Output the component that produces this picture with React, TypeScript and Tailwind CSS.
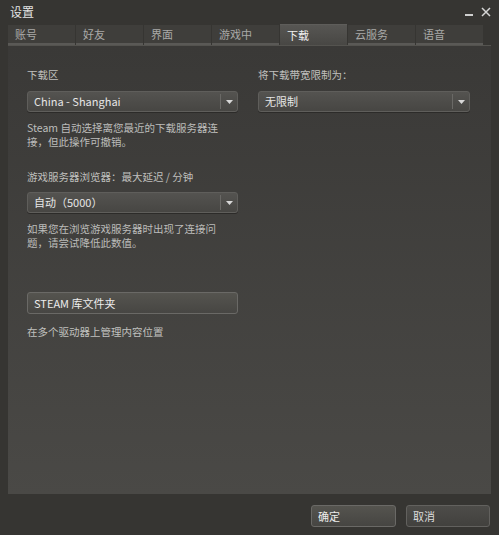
import React from 'react';

const tabs = ['账号', '好友', '界面', '游戏中', '下载', '云服务', '语音'];
const font = { fontFamily: '"Noto Sans CJK SC", "Noto Sans", sans-serif' };

const Dropdown: React.FC<{ value: string }> = ({ value }) => (
  <div className="flex h-[21px] items-center rounded-[3px] border border-[#5f5e5b] bg-gradient-to-b from-[#545350] to-[#474643] text-[11px] text-[#e6e6e6] shadow-[0_1px_0_#2c2b29]">
    <span className="flex-1 truncate pl-[6px]">{value}</span>
    <div className="flex h-[15px] w-[17px] items-center justify-center border-l border-[#6a6966]">
      <svg width="7" height="4" viewBox="0 0 7 4">
        <path d="M0 0h7L3.5 4z" fill="#d8d8d8" />
      </svg>
    </div>
  </div>
);

const App: React.FC = () => {
  return (
    <div className="flex h-[535px] w-[499px] flex-col bg-[#363532] text-[#c0c0be]" style={font}>
      {/* Title bar */}
      <div className="flex h-[24px] items-center justify-between pl-[10px] pr-[8px]">
        <span className="text-[12px] text-[#e4e4e4]">设置</span>
        <div className="flex items-center gap-[8px] text-[#d0d0d0]">
          <span className="mt-[5px] block h-[2px] w-[8px] bg-[#cfcfcf]" />
          <svg width="10" height="10" viewBox="0 0 10 10">
            <path d="M1 1L9 9M9 1L1 9" stroke="#d6d6d6" strokeWidth="1.5" />
          </svg>
        </div>
      </div>

      {/* Tabs */}
      <div className="flex h-[21px] gap-[1px] px-[8px]">
        {tabs.map((t) => {
          const active = t === '下载';
          return (
            <div
              key={t}
              className={
                active
                  ? 'flex h-[21px] w-[67px] items-center border-t border-[#5e5d5a] bg-gradient-to-b from-[#575653] to-[#484744] pl-[7px] text-[11px] text-[#f0f0f0]'
                  : 'mt-[1px] flex h-[20px] w-[67px] items-center border-b-2 border-[#5a5956] bg-[#3f3e3b] pl-[7px] text-[11px] text-[#a9a9a7]'
              }
            >
              {t}
            </div>
          );
        })}
      </div>

      {/* Panel */}
      <div className="mx-[8px] flex-1 border-t border-[#54534f] bg-gradient-to-b from-[#3a3937] to-[#4a4946]">
        <div className="grid grid-cols-[211px_212px] gap-x-[20px] pl-[19px] pt-[20px] text-[10.5px]">
          <div className="flex flex-col">
            <div className="h-[17px] leading-[17px]">下载区</div>
            <div className="mt-[8px]">
              <Dropdown value="China - Shanghai" />
            </div>
            <p className="mt-[9px] pr-[2px] leading-[14px] text-[#bcbcba]">
              Steam 自动选择离您最近的下载服务器连接，但此操作可撤销。
            </p>
            <div className="mt-[19px] h-[17px] leading-[17px]">游戏服务器浏览器：最大延迟 / 分钟</div>
            <div className="mt-[7px]">
              <Dropdown value="自动（5000）" />
            </div>
            <p className="mt-[9px] pr-[2px] leading-[14px] text-[#bcbcba]">
              如果您在浏览游戏服务器时出现了连接问题，请尝试降低此数值。
            </p>
            <div className="mt-[42px] flex h-[22px] items-center rounded-[3px] border border-[#6a6966] bg-gradient-to-b from-[#55544f] to-[#474643] pl-[6px] text-[11px] text-[#ececec]">
              STEAM 库文件夹
            </div>
            <div className="mt-[9px] h-[17px] leading-[17px]">在多个驱动器上管理内容位置</div>
          </div>
          <div className="flex flex-col">
            <div className="h-[17px] leading-[17px]">将下载带宽限制为：</div>
            <div className="mt-[8px]">
              <Dropdown value="无限制" />
            </div>
          </div>
        </div>
      </div>

      {/* Footer */}
      <div className="flex h-[41px] items-start justify-end gap-[10px] pr-[9px] pt-[11px]">
        <button className="flex h-[22px] w-[85px] items-center rounded-[3px] border border-[#6a6966] bg-gradient-to-b from-[#55544f] to-[#464542] pl-[6px] text-[11px] text-[#ececec]">
          确定
        </button>
        <button className="flex h-[22px] w-[84px] items-center rounded-[3px] border border-[#62615e] bg-gradient-to-b from-[#4d4c49] to-[#42413e] pl-[6px] text-[11px] text-[#dcdcdc]">
          取消
        </button>
      </div>
    </div>
  );
};

export default App;
